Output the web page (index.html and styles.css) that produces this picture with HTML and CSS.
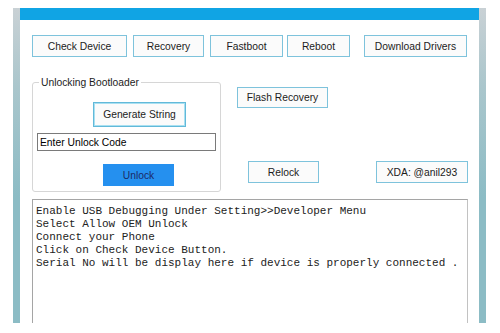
FILE: index.html
```html
<!DOCTYPE html>
<html lang="en">
<head>
    <meta charset="UTF-8">
    <meta name="viewport" content="width=device-width, initial-scale=1.0">
    <title>Bootloader Unlock Tool</title>
    <link rel="stylesheet" href="styles.css">
</head>
<body>
    <div class="window">
        <div class="titlebar"></div>
        <div class="content">
            <div class="toolbar">
                <button class="btn btn-check">Check Device</button>
                <button class="btn btn-recovery">Recovery</button>
                <button class="btn btn-fastboot">Fastboot</button>
                <button class="btn btn-reboot">Reboot</button>
                <button class="btn btn-drivers">Download Drivers</button>
            </div>

            <div class="middle">
                <fieldset class="group">
                    <legend>Unlocking Bootloader</legend>
                    <button class="btn btn-generate">Generate String</button>
                    <input class="code-input" type="text" value="Enter Unlock Code">
                    <button class="btn-unlock">Unlock</button>
                </fieldset>

                <div class="side">
                    <div>
                        <button class="btn btn-flash">Flash Recovery</button>
                    </div>
                    <div class="side-row">
                        <button class="btn btn-relock">Relock</button>
                        <button class="btn btn-xda">XDA: @anil293</button>
                    </div>
                </div>
            </div>

            <div class="log">Enable USB Debugging Under Setting&gt;&gt;Developer Menu
Select Allow OEM Unlock
Connect your Phone
Click on Check Device Button.
Serial No will be display here if device is properly connected .</div>
        </div>
    </div>
</body>
</html>
```

FILE: styles.css
```css
/* General */
body {
    margin: 0;
    background-color: #fff;
    font-family: "Liberation Sans", Arial, sans-serif;
    color: #1c1c1c;
}

/* Window frame */
.window {
    margin: 8px 0 0 13px;
    width: 459px;
    height: 315px;
    padding: 0 7px;
    display: flex;
    flex-direction: column;
    overflow: hidden;
    background: linear-gradient(to bottom, #c9d1d5 0%, #aac6cc 25%, #8cbcc5 60%, #8cbcc5 100%);
}

.titlebar {
    height: 12px;
    background-color: #10a4e4;
}

.content {
    flex: 1;
    background-color: #fff;
    padding-left: 12px;
    overflow: hidden;
}

/* Buttons */
.btn {
    box-sizing: border-box;
    height: 22px;
    margin: 0;
    padding: 0;
    border: 1px solid #7ec3dc;
    background-color: #fbfbfb;
    font-family: "Liberation Sans", Arial, sans-serif;
    font-size: 10.3px;
    color: #1c1c1c;
}

.toolbar {
    display: flex;
    margin-top: 15px;
    height: 22px;
}

.btn-check { width: 95px; }
.btn-recovery { width: 71px; margin-left: 6px; }
.btn-fastboot { width: 73px; margin-left: 6px; }
.btn-reboot { width: 63px; margin-left: 4px; }
.btn-drivers { width: 103px; margin-left: 14px; }

/* Middle section */
.middle {
    display: flex;
    margin-top: 19px;
}

.group {
    box-sizing: border-box;
    width: 189px;
    margin: 0;
    padding: 0 0 5px 0;
    border: 1px solid #d6d6d6;
    border-radius: 3px;
    min-width: 0;
}

.group legend {
    margin-left: 6px;
    padding: 0 2px;
    font-size: 10.3px;
    line-height: 13px;
    color: #1c1c1c;
}

.btn-generate {
    display: block;
    width: 93px;
    height: 25px;
    margin: 13px 0 0 60px;
    border-color: #62b9d9;
    box-shadow: inset 0 0 0 1px #a9e0f1;
}

.code-input {
    display: block;
    box-sizing: border-box;
    width: 179px;
    height: 18px;
    margin: 6px 0 0 4px;
    padding: 0 2px;
    border: 1px solid #7a7a7a;
    font-family: "Liberation Sans", Arial, sans-serif;
    font-size: 10.3px;
    color: #000;
    outline: none;
}

.btn-unlock {
    display: block;
    width: 71px;
    height: 22px;
    margin: 13px 0 0 70px;
    padding: 0;
    border: none;
    background-color: #2590ef;
    font-family: "Liberation Sans", Arial, sans-serif;
    font-size: 10.3px;
    color: #1b2a66;
}

.side {
    flex: 1;
    display: flex;
    flex-direction: column;
    justify-content: space-between;
    padding: 11px 0 9px;
}

.btn-flash { width: 91px; height: 21px; margin-left: 16px; }

.side-row {
    display: flex;
}

.btn-relock { width: 71px; margin-left: 27px; }
.btn-xda { width: 92px; margin-left: 57px; }

/* Output log */
.log {
    box-sizing: border-box;
    width: 436px;
    height: 200px;
    margin-top: 7px;
    padding: 5px 3px 3px;
    border: 1px solid #a5a5a5;
    border-right-color: #c2c2c2;
    font-family: "Liberation Mono", "Courier New", monospace;
    font-size: 11px;
    line-height: 13px;
    color: #222;
    white-space: pre;
}
```
